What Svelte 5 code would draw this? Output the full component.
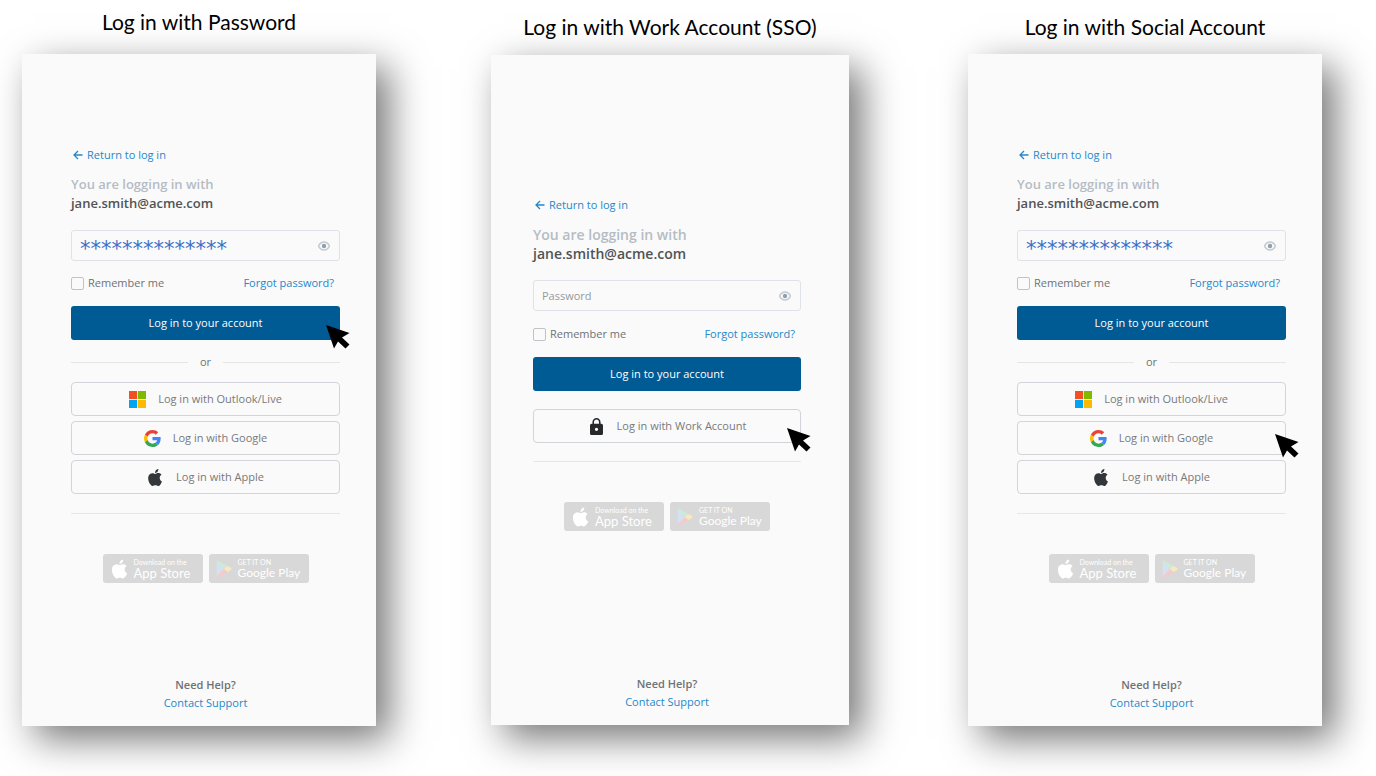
<script lang="ts">
  type Provider = "outlook" | "google" | "apple" | "work";

  type Panel = {
    id: string;
    title: string;
    password: string;
    pointer: "submit" | Provider;
    providers: Provider[];
  };

  const labels: Record<Provider, string> = {
    outlook: "Log in with Outlook/Live",
    google: "Log in with Google",
    apple: "Log in with Apple",
    work: "Log in with Work Account",
  };

  const email = "jane.smith@acme.com";

  const panels: Panel[] = $state([
    {
      id: "password",
      title: "Log in with Password",
      password: "**************",
      pointer: "submit",
      providers: ["outlook", "google", "apple"],
    },
    {
      id: "sso",
      title: "Log in with Work Account (SSO)",
      password: "",
      pointer: "work",
      providers: ["work"],
    },
    {
      id: "social",
      title: "Log in with Social Account",
      password: "**************",
      pointer: "google",
      providers: ["outlook", "google", "apple"],
    },
  ]);
</script>

{#snippet pointer()}
  <svg class="pointer" viewBox="0 0 24 24" aria-hidden="true">
    <path d="M0 0 23.500 8 16 12.500 23.500 19.500 19.500 23.500 12 16.500 8 23.500Z" />
  </svg>
{/snippet}

{#snippet apple()}
  <path
    d="M18.710 19.500c-.830 1.240-1.710 2.450-3.050 2.470-1.340.030-1.770-.790-3.290-.790-1.530 0-2 .770-3.270.820-1.310.050-2.300-1.320-3.140-2.530C4.250 17 2.940 12.450 4.700 9.390c.870-1.520 2.430-2.480 4.120-2.510 1.280-.020 2.500.870 3.290.870.780 0 2.260-1.070 3.810-.910.650.030 2.470.260 3.640 1.980-.090.060-2.170 1.280-2.150 3.810.030 3.020 2.650 4.030 2.680 4.040-.030.070-.420 1.440-1.380 2.830M13 3.500c.730-.830 1.940-1.460 2.940-1.500.130 1.170-.340 2.350-1.040 3.190-.690.850-1.830 1.510-2.950 1.420-.150-1.150.410-2.350 1.050-3.110z"
  />
{/snippet}

{#snippet icon(name: Provider)}
  {#if name === "outlook"}
    <svg class="icon" viewBox="0 0 16 16" aria-hidden="true">
      <path fill="#f25022" d="M0 0h7.600v7.600H0z" />
      <path fill="#7fba00" d="M8.400 0H16v7.600H8.400z" />
      <path fill="#00a4ef" d="M0 8.400h7.600V16H0z" />
      <path fill="#ffb900" d="M8.400 8.400H16V16H8.400z" />
    </svg>
  {:else if name === "google"}
    <svg class="icon" viewBox="0 0 48 48" aria-hidden="true">
      <path fill="#ea4335" d="M24 9.500c3.540 0 6.710 1.220 9.210 3.600l6.850-6.850C35.900 2.380 30.470 0 24 0 14.620 0 6.510 5.380 2.560 13.220l7.980 6.190C12.430 13.720 17.740 9.500 24 9.500z" />
      <path fill="#4285f4" d="M46.980 24.550c0-1.570-.150-3.090-.380-4.550H24v9.020h12.940c-.580 2.960-2.260 5.480-4.780 7.180l7.730 6c4.510-4.180 7.090-10.360 7.090-17.650z" />
      <path fill="#fbbc05" d="M10.530 28.590c-.480-1.450-.760-2.990-.760-4.590s.270-3.140.760-4.590l-7.980-6.190C.920 16.460 0 20.120 0 24s.920 7.540 2.560 10.780l7.970-6.190z" />
      <path fill="#34a853" d="M24 48c6.480 0 11.930-2.130 15.890-5.810l-7.730-6c-2.150 1.450-4.920 2.300-8.160 2.300-6.260 0-11.570-4.220-13.470-9.910l-7.980 6.190C6.510 42.620 14.620 48 24 48z" />
    </svg>
  {:else if name === "apple"}
    <svg class="icon" viewBox="4 2 17 20" fill="#33373b" aria-hidden="true">
      {@render apple()}
    </svg>
  {:else}
    <svg class="icon" viewBox="3 1 18 21" fill="#26282a" aria-hidden="true">
      <path d="M18 8h-1V6c0-2.760-2.240-5-5-5S7 3.240 7 6v2H6c-1.100 0-2 .900-2 2v10c0 1.100.900 2 2 2h12c1.100 0 2-.900 2-2V10c0-1.100-.900-2-2-2zm-6 9c-1.100 0-2-.900-2-2s.900-2 2-2 2 .900 2 2-.900 2-2 2zm3.100-9H8.900V6c0-1.710 1.390-3.100 3.100-3.100s3.100 1.390 3.100 3.100v2z" />
    </svg>
  {/if}
{/snippet}

<main class="page">
  {#each panels as panel (panel.id)}
    <section class="panel {panel.id}">
      <h1>{panel.title}</h1>

      <div class="card">
        <a class="back" href="#login">
          <svg viewBox="0 0 10 10" aria-hidden="true">
            <path d="M9.500 5H1M5 1 1 5l4 4" />
          </svg>
          Return to log in
        </a>

        <p class="who">
          You are logging in with
          <strong>{email}</strong>
        </p>

        <div class="field">
          <input
            type="text"
            placeholder="Password"
            aria-label="Password"
            autocomplete="off"
            bind:value={panel.password}
          />
          <button class="reveal" type="button" aria-label="Show password">
            <svg viewBox="0 0 12 10" aria-hidden="true">
              <path d="M.500 5C2 2 4 1 6 1s4 1 5.500 4C10 8 8 9 6 9S2 8 .500 5Z" />
              <circle cx="6" cy="5" r="2.200" />
            </svg>
          </button>
        </div>

        <div class="options">
          <label><input type="checkbox" />Remember me</label>
          <a href="#forgot">Forgot password?</a>
        </div>

        <div class="target">
          <button class="submit" type="button">Log in to your account</button>
          {#if panel.pointer === "submit"}{@render pointer()}{/if}
        </div>

        {#if panel.providers.length > 1}
          <div class="or">or</div>
        {/if}

        <div class="providers">
          {#each panel.providers as name (name)}
            <div class="target">
              <button class="provider" type="button">
                {@render icon(name)}
                {labels[name]}
              </button>
              {#if panel.pointer === name}{@render pointer()}{/if}
            </div>
          {/each}
        </div>

        <hr />

        <div class="stores">
          <a class="store" href="#app-store">
            <svg viewBox="4 2 17 20" fill="#fff" aria-hidden="true">
              {@render apple()}
            </svg>
            <span><small>Download on the</small>App Store</span>
          </a>
          <a class="store play" href="#google-play">
            <svg viewBox="0 0 18 20" aria-hidden="true">
              <path fill="#d3e1f2" d="M1 1v18l8-9z" />
              <path fill="#ccebd5" d="M1 0l12 7-4 3-8-8z" />
              <path fill="#f6c9cb" d="M1 20l12-7-4-3-8 8z" />
              <path fill="#f9e8bd" d="M13 6.500l4 2.500q1 1 0 2l-4 2.500L9 10z" />
            </svg>
            <span><small>GET IT ON</small>Google Play</span>
          </a>
        </div>

        <footer>
          <strong>Need Help?</strong>
          <a href="#support">Contact Support</a>
        </footer>
      </div>
    </section>
  {/each}
</main>

<style>
  :global(body) {
    margin: 0;
    background: #fff;
  }

  .page {
    display: grid;
    grid-template-columns: minmax(0, 354fr) minmax(0, 358fr) minmax(0, 358fr);
    column-gap: 115px;
    padding: 8px 54px 50px 22px;
    font-family: "Open Sans", "Noto Sans", sans-serif;
    font-size: 11px;
    line-height: 16px;
    color: #6f7275;
  }

  .panel.sso,
  .panel.social {
    padding-top: 5px;
  }
  .panel.social {
    padding-left: 4px;
  }

  h1 {
    margin: 0 0 18px;
    font-family: Lato, sans-serif;
    font-size: 21px;
    font-weight: 400;
    line-height: 28px;
    text-align: center;
    color: #000;
  }
  .sso h1 {
    margin-bottom: 14px;
  }
  .social h1 {
    margin-bottom: 13px;
  }

  .card {
    display: flex;
    flex-direction: column;
    padding: 93px 36px 14px 49px;
    background: #fafafa;
    box-shadow: 13px 13px 36px rgba(0, 0, 0, 0.54);
  }
  .sso .card {
    padding: 142px 48px 14px 42px;
  }

  a {
    color: #2488cb;
    text-decoration: none;
  }

  button,
  input {
    font: inherit;
  }

  button {
    cursor: pointer;
  }

  .back {
    display: flex;
    align-items: center;
    gap: 4px;
    padding-left: 2px;
  }

  .back svg {
    width: 10px;
    height: 10px;
    fill: none;
    stroke: currentColor;
    stroke-width: 1.300;
  }

  .who {
    margin: 12px 0 17px;
    font-size: 13px;
    font-weight: 600;
    line-height: 19px;
    color: #b5bcc4;
  }
  .sso .who {
    font-size: 14px;
  }

  .who strong {
    display: block;
    font-weight: 600;
    color: #505356;
  }

  .field {
    display: flex;
    align-items: center;
    box-sizing: border-box;
    height: 31px;
    padding: 0 9px 0 8px;
    border: 1px solid #dfe2e8;
    border-radius: 3px;
  }

  .field input {
    flex: 1;
    min-width: 0;
    padding: 6px 0 0;
    border: 0;
    outline: 0;
    background: none;
    font-family: "DejaVu Sans", sans-serif;
    font-size: 21px;
    color: #3a6fc8;
  }

  .field input:placeholder-shown {
    padding: 0;
    font-family: inherit;
    font-size: 11px;
  }

  .field input::placeholder {
    color: #96999c;
    opacity: 1;
  }

  .reveal {
    display: flex;
    padding: 0;
    border: 0;
    background: none;
  }

  .reveal svg {
    width: 12px;
    height: 10px;
    fill: none;
    stroke: #c3cad2;
    stroke-width: 1.600;
  }

  .reveal circle {
    fill: #8fa0b0;
    stroke: none;
  }

  .options {
    display: flex;
    justify-content: space-between;
    margin: 14px 0 15px;
    padding-right: 6px;
  }
  .sso .options {
    margin-top: 15px;
  }

  .options label {
    display: flex;
    align-items: center;
    gap: 4px;
  }

  .options input {
    appearance: none;
    box-sizing: border-box;
    width: 13px;
    height: 13px;
    margin: 0;
    border: 1px solid #bfc2c9;
    border-radius: 2px;
  }

  .target {
    position: relative;
  }

  .submit {
    display: block;
    width: 100%;
    height: 34px;
    border: 0;
    border-radius: 3px;
    background: #005a94;
    color: #fff;
  }

  .pointer {
    position: absolute;
    top: 19px;
    right: -10px;
    width: 24px;
    height: 24px;
  }

  .social .pointer {
    top: 13px;
    right: -13px;
  }

  .or {
    display: flex;
    align-items: center;
    gap: 12px;
    margin-top: 14px;
  }

  .or::before,
  .or::after {
    content: "";
    flex: 1;
    height: 1px;
    background: #e4e5e7;
  }

  .providers {
    display: flex;
    flex-direction: column;
    gap: 5px;
    margin: 12px 0 19px;
  }
  .sso .providers {
    margin: 18px 0;
  }

  .provider {
    display: flex;
    align-items: center;
    justify-content: center;
    gap: 12px;
    width: 100%;
    height: 34px;
    border: 1px solid #d3d4da;
    border-radius: 4px;
    background: none;
    color: #77797c;
  }

  .icon {
    width: 17px;
    height: 17px;
  }

  hr {
    width: 100%;
    height: 1px;
    margin: 0 0 40px;
    border: 0;
    background: #e6e7e9;
  }

  .stores {
    display: flex;
    justify-content: center;
    gap: 6px;
  }

  .store {
    display: flex;
    align-items: center;
    gap: 6px;
    box-sizing: border-box;
    width: 100px;
    height: 29px;
    padding-left: 9px;
    border-radius: 3px;
    background: #d8d8d8;
    font-family: Lato, sans-serif;
    font-size: 13px;
    line-height: 14px;
    white-space: nowrap;
    color: #fff;
  }

  .store svg {
    flex: none;
    width: 16px;
    height: 20px;
  }

  .store small {
    display: block;
    font-size: 7px;
    line-height: 8px;
  }

  .store.play {
    padding-left: 7px;
    font-size: 12px;
  }

  footer {
    display: flex;
    flex-direction: column;
    align-items: center;
    margin-top: 93px;
    line-height: 18px;
  }
  .sso footer {
    margin-top: 144px;
  }

  footer strong {
    font-weight: 600;
  }
</style>
